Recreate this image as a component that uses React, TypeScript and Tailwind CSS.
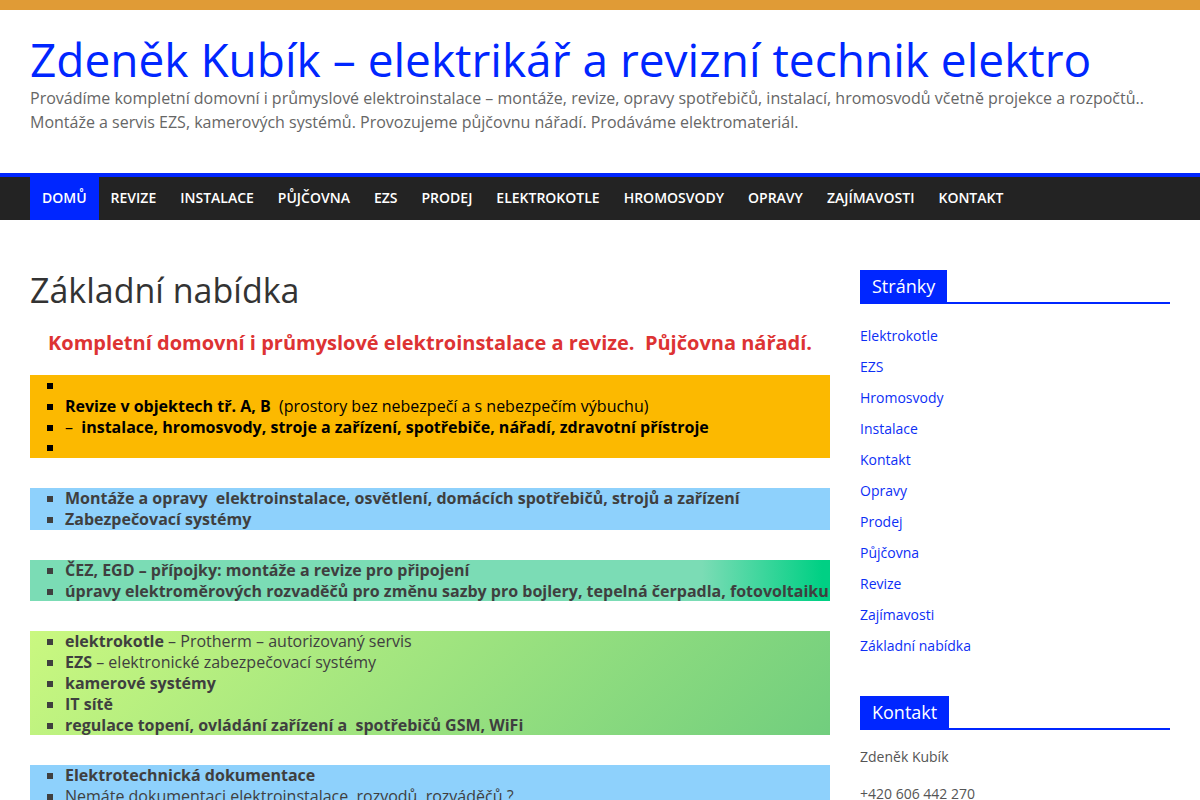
import React from "react";

const navItems = ["DOMŮ", "REVIZE", "INSTALACE", "PŮJČOVNA", "EZS", "PRODEJ", "ELEKTROKOTLE", "HROMOSVODY", "OPRAVY", "ZAJÍMAVOSTI", "KONTAKT"];
const pages = ["Elektrokotle", "EZS", "Hromosvody", "Instalace", "Kontakt", "Opravy", "Prodej", "Půjčovna", "Revize", "Zajímavosti", "Základní nabídka"];

function WidgetTitle({ children }: { children: React.ReactNode }) {
  return (
    <div className="border-b-2 border-[#0026ff]">
      <span className="inline-block bg-[#0026ff] text-white text-[18px] leading-[32px] px-3">{children}</span>
    </div>
  );
}

export default function App() {
  return (
    <div className="min-h-[800px] bg-white" style={{ fontFamily: '"Open Sans", "Noto Sans", sans-serif' }}>
      <div className="h-[10px] bg-[#e09b36]" />
      <header className="px-[30px] pt-[22px] pb-[39px]">
        <div className="text-[46px] leading-[54px] text-[#0026ff]">Zdeněk Kubík – elektrikář a revizní technik elektro</div>
        <p className="text-[16px] leading-[24px] text-[#666666]">
          Provádíme kompletní domovní i průmyslové elektroinstalace – montáže, revize, opravy spotřebičů, instalací, hromosvodů včetně projekce a rozpočtů..
          <br />
          Montáže a servis EZS, kamerových systémů. Provozujeme půjčovnu nářadí. Prodáváme elektromateriál.
        </p>
      </header>
      <nav className="border-t-4 border-[#0026ff] bg-[#232323]">
        <ul className="flex px-[30px]">
          {navItems.map((item, i) => (
            <li
              key={item}
              className={
                "px-3 h-[43px] pb-[2px] flex items-center text-[14px] font-semibold text-white " +
                (i === 0 ? "bg-[#0026ff]" : "")
              }
            >
              {item}
            </li>
          ))}
        </ul>
      </nav>
      <div className="flex gap-[30px] px-[30px]">
        <main className="w-[800px] pt-[50px]">
          <h1 className="text-[34px] leading-[41px] text-[#333333]">Základní nabídka</h1>
          <h2 className="mt-[17px] text-center text-[20px] font-bold leading-[30px] text-[#dd3333]">
            Kompletní domovní i průmyslové elektroinstalace a revize.&nbsp; Půjčovna nářadí.
          </h2>
          <div className="mt-[17px] flex flex-col gap-[30px] text-[16px] leading-[1.3]">
            <ul className="bg-[#fcb900] pl-[35px] list-[square] text-black">
              <li>{"\u00a0"}</li>
              <li>
                <strong>Revize v objektech tř. A, B</strong>&nbsp; (prostory bez nebezpečí a s nebezpečím výbuchu)
              </li>
              <li>
                –&nbsp; <strong>instalace, hromosvody, stroje a zařízení, spotřebiče, nářadí, zdravotní přístroje</strong>
              </li>
              <li>{"\u00a0"}</li>
            </ul>
            <ul className="bg-[#8ed1fc] pl-[35px] list-[square] text-[#3f3f3f] font-bold">
              <li>Montáže a opravy&nbsp; elektroinstalace, osvětlení, domácích spotřebičů, strojů a zařízení</li>
              <li>Zabezpečovací systémy</li>
            </ul>
            <ul className="bg-[linear-gradient(90deg,#7bdcb5_0%,#7bdcb5_84%,#00d084_99%)] pl-[35px] list-[square] text-[#3f3f3f] font-bold whitespace-nowrap">
              <li>ČEZ, EGD – přípojky: montáže a revize pro připojení</li>
              <li>úpravy elektroměrových rozvaděčů pro změnu sazby pro bojlery, tepelná čerpadla, fotovoltaiku</li>
            </ul>
            <ul className="bg-[linear-gradient(135deg,#caf880_0%,#71ce7e_100%)] pl-[35px] list-[square] text-[#3f3f3f]">
              <li>
                <strong>elektrokotle</strong> – Protherm – autorizovaný servis
              </li>
              <li>
                <strong>EZS</strong> – elektronické zabezpečovací systémy
              </li>
              <li>
                <strong>kamerové systémy</strong>
              </li>
              <li>
                <strong>IT sítě</strong>
              </li>
              <li>
                <strong>regulace topení, ovládání zařízení a&nbsp; spotřebičů GSM, WiFi</strong>
              </li>
            </ul>
            <ul className="bg-[#8ed1fc] pl-[35px] list-[square] text-[#3f3f3f] pb-[10px]">
              <li>
                <strong>Elektrotechnická dokumentace</strong>
              </li>
              <li>Nemáte dokumentaci elektroinstalace, rozvodů, rozváděčů ?</li>
            </ul>
          </div>
        </main>
        <aside className="w-[310px] pt-[50px]">
          <WidgetTitle>Stránky</WidgetTitle>
          <ul className="mt-[16px]">
            {pages.map((p) => (
              <li key={p} className="py-[5px] text-[14px] leading-[21px] text-[#0d2ff5]">
                {p}
              </li>
            ))}
          </ul>
          <div className="mt-[35px]">
            <WidgetTitle>Kontakt</WidgetTitle>
            <p className="mt-[16px] text-[14px] leading-[22px] text-[#555555]">Zdeněk Kubík</p>
            <p className="mt-[15px] text-[14px] leading-[22px] text-[#555555]">+420 606 442 270</p>
          </div>
        </aside>
      </div>
    </div>
  );
}
